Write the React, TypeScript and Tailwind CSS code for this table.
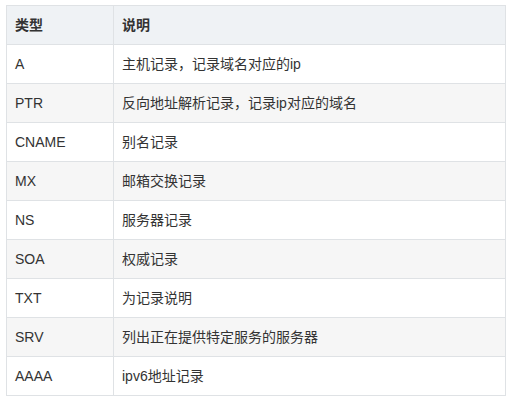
import React from 'react';

type Row = { type: string; desc: string };

const rows: Row[] = [
  { type: 'A', desc: '主机记录，记录域名对应的ip' },
  { type: 'PTR', desc: '反向地址解析记录，记录ip对应的域名' },
  { type: 'CNAME', desc: '别名记录' },
  { type: 'MX', desc: '邮箱交换记录' },
  { type: 'NS', desc: '服务器记录' },
  { type: 'SOA', desc: '权威记录' },
  { type: 'TXT', desc: '为记录说明' },
  { type: 'SRV', desc: '列出正在提供特定服务的服务器' },
  { type: 'AAAA', desc: 'ipv6地址记录' },
];

export default function App() {
  return (
    <div
      className="w-[522px] h-[411px] bg-white pt-[5px] pl-[6px] text-[14px] text-[#333]"
      style={{ fontFamily: '"Liberation Sans", "Noto Sans CJK SC", sans-serif' }}
    >
      <table className="border-collapse w-[500px] table-fixed">
        <colgroup>
          <col className="w-[107px]" />
          <col />
        </colgroup>
        <thead>
          <tr className="bg-[#eff2f5] h-[39px]">
            <th className="border border-[#dfe2e5] px-[8px] text-left font-bold">类型</th>
            <th className="border border-[#dfe2e5] px-[8px] text-left font-bold">说明</th>
          </tr>
        </thead>
        <tbody>
          {rows.map((r, i) => (
            <tr key={r.type} className={i % 2 === 1 ? 'bg-[#f6f6f6] h-[39px]' : 'bg-white h-[39px]'}>
              <td className="border border-[#dfe2e5] px-[8px]">{r.type}</td>
              <td className="border border-[#dfe2e5] px-[8px]">{r.desc}</td>
            </tr>
          ))}
        </tbody>
      </table>
    </div>
  );
}
